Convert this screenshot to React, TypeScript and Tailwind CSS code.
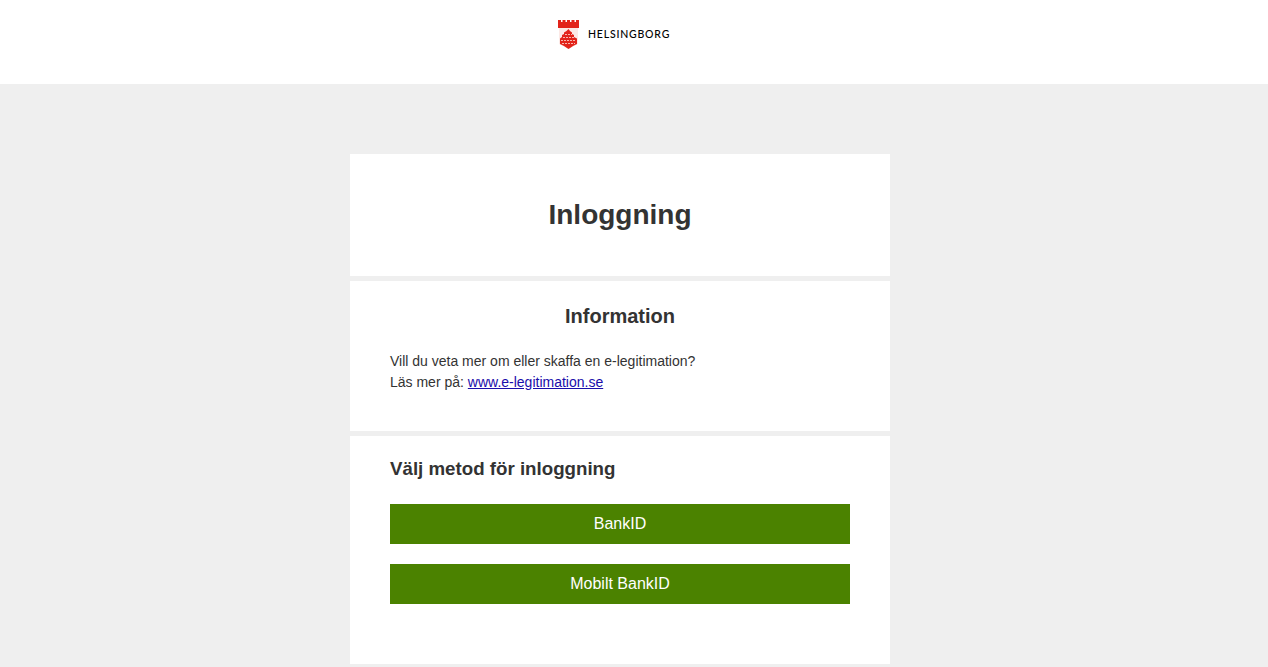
const Logo = () => {
  return (
    <div className="flex items-center gap-[9px]">
      <svg width="21" height="31" viewBox="0 0 21 31" className="block">
        <path
          d="M0 1h3v2h1.500V1h3v2H9V1h3v2h1.500V1h3v2H18V1h3v8H0z"
          fill="#e2231a"
        />
        <path d="M1 9h19v16l-4 2-5.500 3-5.500-3-4-2z" fill="#fce9e6" />
        <path
          d="M10.500 10l1.500 2 2 1.500V15l2 1v2l3 1.500V25l-4 2-4.500 3-4.500-3-4-2v-5.500L4 18v-2l2-1v-1.500L8.500 12z"
          fill="#e2231a"
        />
        <path
          d="M7 15.500h7M5 18.500h11M3 21.500h15M4 24.500h13"
          stroke="#f9c6c0"
          strokeWidth="0.9"
          strokeDasharray="2 1"
          fill="none"
        />
      </svg>
      <span className="font-['Lato',sans-serif] text-[10.5px] font-medium leading-none tracking-[0.8px] text-black">
        HELSINGBORG
      </span>
    </div>
  );
};

const App = () => {
  return (
    <div className="flex min-h-[667px] flex-col bg-[#efefef] font-['Liberation_Sans',Arial,sans-serif] text-[#333333]">
      <header className="flex h-[84px] bg-white pl-[558px] pt-[19px]">
        <div className="h-8">
          <Logo />
        </div>
      </header>
      <main className="ml-[350px] mt-[70px] flex w-[540px] flex-col gap-[5px]">
        <section className="flex h-[122px] items-center justify-center bg-white">
          <h1 className="text-[28px] font-bold leading-8">Inloggning</h1>
        </section>
        <section className="h-[150px] bg-white px-10 pt-[23px]">
          <h2 className="text-center text-xl font-bold leading-6">
            Information
          </h2>
          <p className="mt-[23px] text-sm leading-[21px]">
            Vill du veta mer om eller skaffa en e-legitimation?
            <br />
            Läs mer på:{" "}
            <a href="#" className="text-[#1a0dab] underline">
              www.e-legitimation.se
            </a>
          </p>
        </section>
        <section className="h-[228px] bg-white px-10 pt-[22px]">
          <h3 className="text-[18.72px] font-bold leading-[22px]">
            Välj metod för inloggning
          </h3>
          <div className="mt-6 flex flex-col gap-5">
            <button className="h-10 bg-[#4b8200] text-base text-white">
              BankID
            </button>
            <button className="h-10 bg-[#4b8200] text-base text-white">
              Mobilt BankID
            </button>
          </div>
        </section>
      </main>
    </div>
  );
};

export default App;
